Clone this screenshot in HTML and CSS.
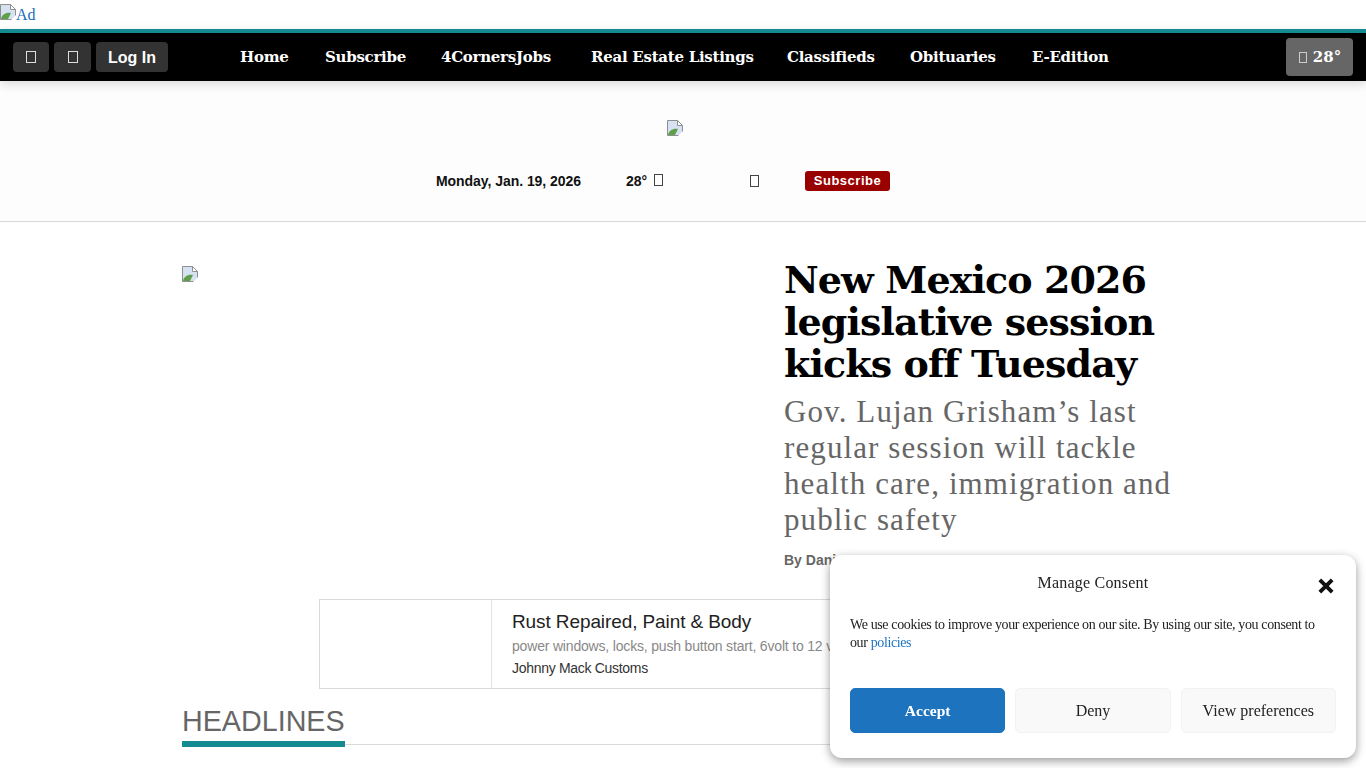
FILE: index.html
```html
<!DOCTYPE html>
<html lang="en">
<head>
<meta charset="utf-8">
<title>The Durango Herald</title>
<link rel="stylesheet" href="styles.css">
</head>
<body>
<div class="top-ad"><a href="#" class="ad-link"><svg class="broken" viewBox="0 0 16 16"><path d="M.5.500h10l5 5v10H.5z" fill="#d6e1f2" stroke="#8f8f8f"/><path d="M10.500.500v5h5z" fill="#fff" stroke="#8f8f8f"/><path d="M1 15c.5-4 5-7 10-6l-3 6z" fill="#5f9f4a"/><path d="M11 16l5-5v5z" fill="#fff"/></svg>Ad</a></div>
<nav class="navbar">
  <div class="nav-tools">
    <span class="tool"><i class="tofu"></i></span>
    <span class="tool wide"><i class="tofu"></i></span>
    <span class="tool login">Log In</span>
  </div>
  <ul class="nav-links">
    <li>Home</li><li>Subscribe</li><li>4CornersJobs</li><li>Real Estate Listings</li><li>Classifieds</li><li>Obituaries</li><li>E-Edition</li>
  </ul>
  <span class="weather"><i class="tofu small"></i> 28°</span>
</nav>
<header class="masthead">
  <svg class="broken logo" viewBox="0 0 16 16"><path d="M.5.500h10l5 5v10H.5z" fill="#d6e1f2" stroke="#8f8f8f"/><path d="M10.500.500v5h5z" fill="#fff" stroke="#8f8f8f"/><path d="M1 15c.5-4 5-7 10-6l-3 6z" fill="#5f9f4a"/><path d="M11 16l5-5v5z" fill="#fff"/></svg>
  <div class="meta">
    <span class="date">Monday, Jan. 19, 2026</span>
    <span class="temp">28° <i class="tofu dark"></i></span>
    <i class="tofu dark gap"></i>
    <span class="sub-btn">Subscribe</span>
  </div>
</header>
<main class="container">
  <section class="hero">
    <div class="hero-img"><svg class="broken" viewBox="0 0 16 16"><path d="M.5.500h10l5 5v10H.5z" fill="#d6e1f2" stroke="#8f8f8f"/><path d="M10.500.500v5h5z" fill="#fff" stroke="#8f8f8f"/><path d="M1 15c.5-4 5-7 10-6l-3 6z" fill="#5f9f4a"/><path d="M11 16l5-5v5z" fill="#fff"/></svg></div>
    <div class="hero-text">
      <h1>New Mexico 2026 legislative session kicks off Tuesday</h1>
      <h2>Gov. Lujan Grisham’s last regular session will tackle health care, immigration and public safety</h2>
      <p class="byline">By Dani</p>
    </div>
  </section>
  <aside class="native-ad">
    <div class="ad-thumb"></div>
    <div class="ad-body">
      <div class="ad-title">Rust Repaired, Paint &amp; Body</div>
      <div class="ad-desc">power windows, locks, push button start, 6volt to 12 v</div>
      <div class="ad-name">Johnny Mack Customs</div>
    </div>
  </aside>
  <div class="section-head"><span>HEADLINES</span></div>
</main>
<div class="consent">
  <div class="consent-head">Manage Consent</div>
  <svg class="close" viewBox="0 0 16 16"><path d="M2.500 2.500l11 11M13.500 2.500l-11 11" stroke="#111" stroke-width="3.400" fill="none"/></svg>
  <p class="consent-text">We use cookies to improve your experience on our site. By using our site, you consent to our <a href="#">policies</a></p>
  <div class="consent-btns">
    <span class="btn accept">Accept</span>
    <span class="btn">Deny</span>
    <span class="btn">View preferences</span>
  </div>
</div>
</body>
</html>
```
FILE: styles.css
```css
html { overflow: hidden; }
body { margin: 0; background: #fff; font-family: "Liberation Serif", serif; color: #000; height: 768px; overflow: hidden; }
.top-ad { height: 29px; }
.ad-link { color: #1a6bb8; text-decoration: none; font-size: 16px; line-height: 18px; display: inline-block; padding-top: 4px; }
.broken { width: 16px; height: 16px; display: inline-block; }
.navbar { height: 48px; background: #000; border-top: 4px solid #148a91; display: flex; align-items: center; padding: 0 13px; box-shadow: 0 3px 10px rgba(0,0,0,.15); position: relative; }
.nav-tools { display: flex; gap: 5px; align-items: center; }
.tool { height: 30px; background: #333; border-radius: 4px; width: 36px; display: flex; align-items: center; justify-content: center; color: #fff; }
.wide { width: 37px; }
.login { font: bold 16px/32px "Liberation Sans", sans-serif; width: 72px; padding-top: 2px; box-sizing: border-box; }
.tofu { display: inline-block; width: 8px; height: 10px; border: 1px solid #ddd; }
.tofu.small { border-color: #ccc; width: 6px; height: 9px; }
.tofu.dark { border-color: #444; width: 7px; height: 10px; margin-left: 3px; }
.nav-links { list-style: none; display: grid; grid-template-columns: 85px 116px 150px 196px 123px 122px auto; margin: 0 0 1px 72px; padding: 0; font: bold 15px "DejaVu Serif", serif; color: #fff; letter-spacing: -.27px; flex: 1; }
.weather { width: 67px; height: 38px; background: #666; border-radius: 4px; color: #fff; font: bold 15px "DejaVu Serif", serif; display: flex; align-items: center; justify-content: center; gap: 6px; padding-left: 1px; box-sizing: border-box; }
.masthead { height: 140px; background: #fdfdfd; border-bottom: 1px solid #d9d9d9; display: flex; flex-direction: column; align-items: center; }
.logo { margin-top: 39px; margin-left: -16px; }
.meta { margin-top: 35px; display: flex; align-items: center; font: bold 14px "Liberation Sans", sans-serif; color: #111; margin-left: -40px; width: 454px; }
.date { width: 190px; font-size: 14px; letter-spacing: -.05px; }
.temp { width: 121px; }
.gap { margin-right: 46px; }
.sub-btn { width: 85px; box-sizing: border-box; text-align: center; background: #900; color: #fff; border-radius: 3px; padding: 3px 0; font-size: 13px; line-height: 14px; letter-spacing: .5px; }
.container { width: 1002px; margin: 0 auto 0 182px; }
.hero { display: flex; height: 377px; }
.hero-img { width: 602px; padding-top: 44px; box-sizing: border-box; }
.hero-text { width: 400px; padding-top: 37px; }
h1 { margin: 0; font: bold 38px/42px "DejaVu Serif", serif; letter-spacing: -.9px; }
h2 { margin: 9px 0 0; font: 400 31px/36px "Liberation Serif", serif; letter-spacing: 1.1px; color: #666; }
.byline { margin: 14px 0 0; font: bold 14px "Liberation Sans", sans-serif; color: #666; }
.native-ad { width: 728px; height: 88px; margin-left: 137px; border: 1px solid #d9d9d9; display: flex; overflow: hidden; }
.ad-thumb { width: 171px; border-right: 1px solid #e4e4e4; }
.ad-body { padding: 10px 20px; font-family: "Liberation Sans", sans-serif; white-space: nowrap; }
.ad-title { font-size: 19px; line-height: 24px; color: #222; letter-spacing: -.1px; }
.ad-desc { font-size: 14px; line-height: 22px; color: #888; margin-top: 1px; letter-spacing: -.18px; }
.ad-name { font-size: 14px; line-height: 22px; color: #333; letter-spacing: -.3px; }
.section-head { margin-top: 16px; border-bottom: 1px solid #d9d9d9; height: 39px; }
.section-head span { display: inline-block; height: 36px; font: 28.7px/32px "Liberation Sans", sans-serif; color: #666; border-bottom: 6px solid #148a91; }
.consent { position: fixed; left: 830px; top: 555px; width: 526px; height: 203px; box-sizing: border-box; background: #fff; border-radius: 12px; box-shadow: 0 3px 10px rgba(0,0,0,.4); padding: 19px 20px; }
.consent-head { text-align: center; font-size: 16px; line-height: 18px; color: #222; letter-spacing: .2px; }
.close { position: absolute; right: 21px; top: 22px; width: 18px; height: 18px; }
.consent-text { margin: 24px 0 0; padding-right: 16px; font-size: 14px; line-height: 18px; color: #222; letter-spacing: -.38px; }
.consent-text a { color: #1e73be; text-decoration: none; }
.consent-btns { display: flex; gap: 10px; margin-top: 36px; }
.btn { flex: 1; height: 45px; background: #f9f9f9; border: 1px solid #f2f2f2; border-radius: 5px; box-sizing: border-box; display: flex; align-items: center; justify-content: center; font-size: 16px; color: #222; padding-top: 1px; }
.accept { background: #1e73be; border-color: #1e73be; color: #fff; font-size: 15.500px; font-weight: bold; }
```
